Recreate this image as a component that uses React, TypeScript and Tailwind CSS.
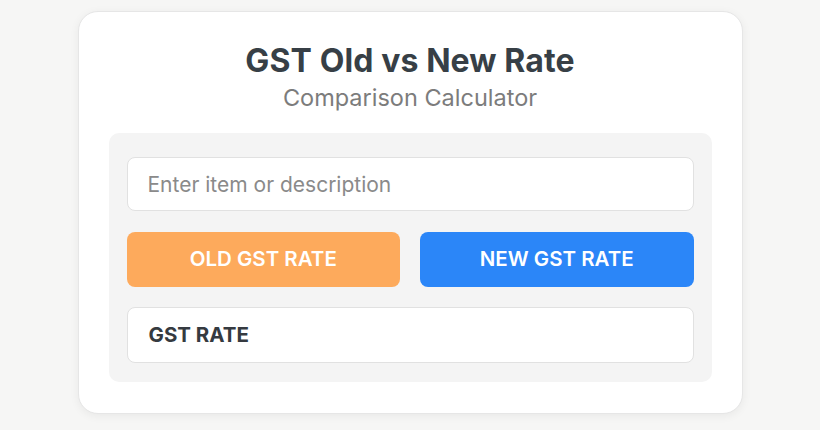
export default function App() {
  return (
    <div
      className="min-h-[430px] w-full bg-[#f6f6f5] pt-[11px]"
      style={{ fontFamily: "Inter, 'Noto Sans', sans-serif" }}
    >
      <div className="mx-auto w-[665px] rounded-[20px] border border-[#e6e6e6] bg-white px-[30px] pb-[31px] pt-[30px] shadow-[0_2px_10px_rgba(0,0,0,0.06)]">
        <h1 className="text-center text-[32px] font-bold leading-[38px] tracking-[0.1px] text-[#373f46]">
          GST Old vs New Rate
        </h1>
        <p className="mt-[3px] text-center text-[23.5px] leading-[29px] text-[#7c7c7c]">
          Comparison Calculator
        </p>
        <div className="mt-[21px] rounded-[10px] bg-[#f4f4f4] px-[18px] pb-[19px] pt-[24px]">
          <input
            type="text"
            placeholder="Enter item or description"
            className="block h-[54px] w-full rounded-[8px] border border-[#e1e1e1] bg-white px-5 text-[21px] text-[#333] outline-none placeholder:text-[#8a8a8a]"
          />
          <div className="mt-[21px] grid grid-cols-2 gap-5">
            <button
              type="button"
              className="h-[55px] rounded-[8px] bg-[#fdaa5c] text-[20.5px] font-semibold text-white"
            >
              OLD GST RATE
            </button>
            <button
              type="button"
              className="h-[55px] rounded-[8px] bg-[#2b86f8] text-[20.5px] font-semibold text-white"
            >
              NEW GST RATE
            </button>
          </div>
          <div className="mt-5 flex h-[56px] items-center rounded-[8px] border border-[#e1e1e1] bg-white px-[21px] text-[20.5px] font-bold text-[#353a40]">
            GST RATE
          </div>
        </div>
      </div>
    </div>
  );
}
